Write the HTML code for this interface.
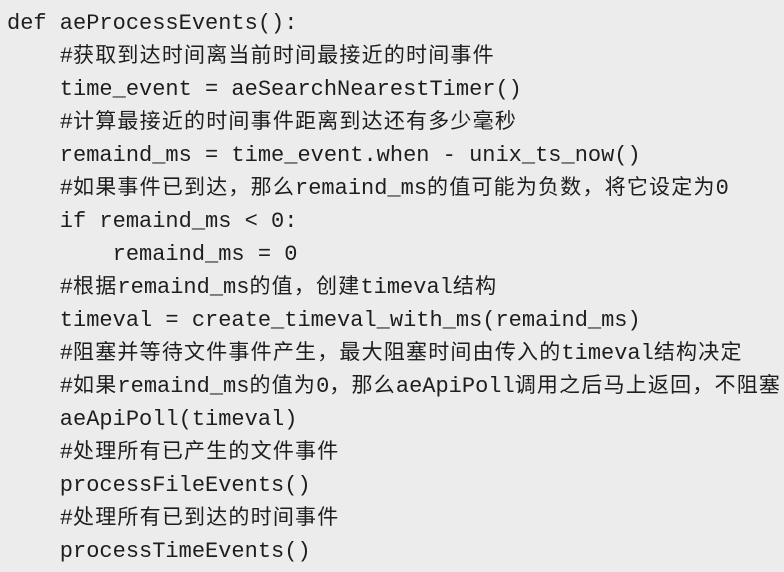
<!DOCTYPE html>
<html><head><meta charset="utf-8"><style>
html,body{margin:0;padding:0;background:#ececec;}
body{width:784px;height:572px;overflow:hidden;}
.p{padding:7px 0 0 7px;font-family:"Liberation Mono","Noto Sans CJK SC",monospace;font-size:22px;color:#1e1e1e;}
.p div{height:33px;line-height:33px;white-space:pre;overflow:visible;}
.c{font-family:"Noto Sans CJK SC",sans-serif;letter-spacing:1.2px;font-size:21px;line-height:1;}
</style></head><body><div class="p">
<div>def aeProcessEvents():</div>
<div>    #<span class="c">获取到达时间离当前时间最接近的时间事件</span></div>
<div>    time_event = aeSearchNearestTimer()</div>
<div>    #<span class="c">计算最接近的时间事件距离到达还有多少毫秒</span></div>
<div>    remaind_ms = time_event.when - unix_ts_now()</div>
<div>    #<span class="c">如果事件已到达，那么</span>remaind_ms<span class="c">的值可能为负数，将它设定为</span>0</div>
<div>    if remaind_ms &lt; 0:</div>
<div>        remaind_ms = 0</div>
<div>    #<span class="c">根据</span>remaind_ms<span class="c">的值，创建</span>timeval<span class="c">结构</span></div>
<div>    timeval = create_timeval_with_ms(remaind_ms)</div>
<div>    #<span class="c">阻塞并等待文件事件产生，最大阻塞时间由传入的</span>timeval<span class="c">结构决定</span></div>
<div>    #<span class="c">如果</span>remaind_ms<span class="c">的值为</span>0<span class="c">，那么</span>aeApiPoll<span class="c">调用之后马上返回，不阻塞</span></div>
<div>    aeApiPoll(timeval)</div>
<div>    #<span class="c">处理所有已产生的文件事件</span></div>
<div>    processFileEvents()</div>
<div>    #<span class="c">处理所有已到达的时间事件</span></div>
<div>    processTimeEvents()</div>
</div></body></html>
